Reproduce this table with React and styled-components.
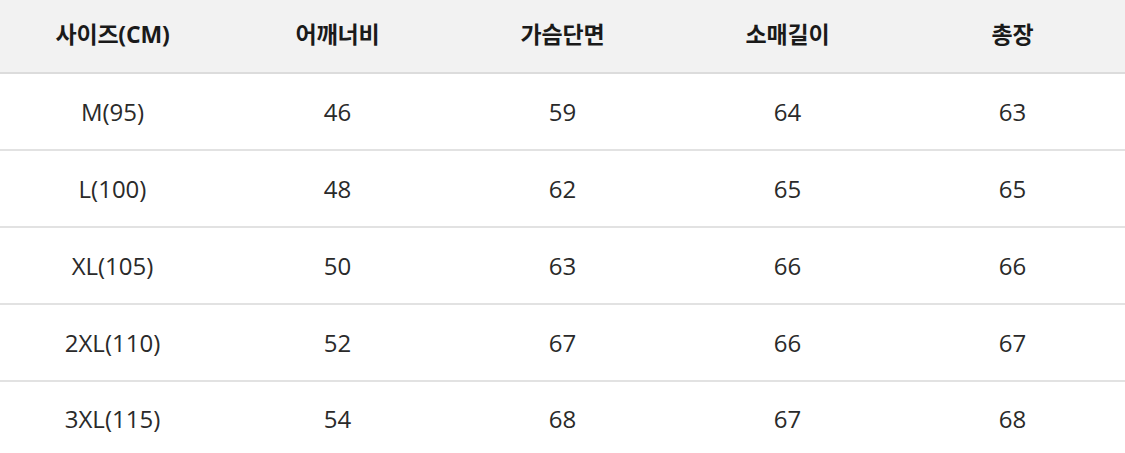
import styled, { createGlobalStyle } from "styled-components";

const GlobalStyle = createGlobalStyle`
  html, body { margin: 0; padding: 0; background: #fff; }
  body {
    font-family: "Open Sans", "Noto Sans CJK KR", sans-serif;
    color: #222;
  }
`;

const Table = styled.div`
  width: 1125px;
  display: grid;
  grid-template-columns: repeat(5, 1fr);
`;

const HeadCell = styled.div`
  height: 74px;
  box-sizing: border-box;
  padding-bottom: 6px;
  display: flex;
  align-items: center;
  justify-content: center;
  background: #f2f2f2;
  border-bottom: 2px solid #dcdcdc;
  font-family: "Open Sans", "Noto Sans CJK KR", sans-serif;
  font-weight: 700;
  font-size: 23px;
  color: #1a1a1a;
  letter-spacing: -0.2px;
`;

const Cell = styled.div`
  height: ${({ last }) => (last ? "72px" : "77px")};
  box-sizing: border-box;
  display: flex;
  align-items: center;
  justify-content: center;
  border-bottom: ${({ last }) => (last ? "none" : "2px solid #e2e2e2")};
  font-size: 24px;
  color: #2a2a2a;
`;

const headers = ["사이즈(CM)", "어깨너비", "가슴단면", "소매길이", "총장"];

const rows = [
  ["M(95)", "46", "59", "64", "63"],
  ["L(100)", "48", "62", "65", "65"],
  ["XL(105)", "50", "63", "66", "66"],
  ["2XL(110)", "52", "67", "66", "67"],
  ["3XL(115)", "54", "68", "67", "68"],
];

export default function App() {
  return (
    <>
      <GlobalStyle />
      <Table>
        {headers.map((h) => (
          <HeadCell key={h}>{h}</HeadCell>
        ))}
        {rows.map((r, i) =>
          r.map((v, j) => (
            <Cell key={i + "-" + j} last={i === rows.length - 1}>
              {v}
            </Cell>
          ))
        )}
      </Table>
    </>
  );
}
